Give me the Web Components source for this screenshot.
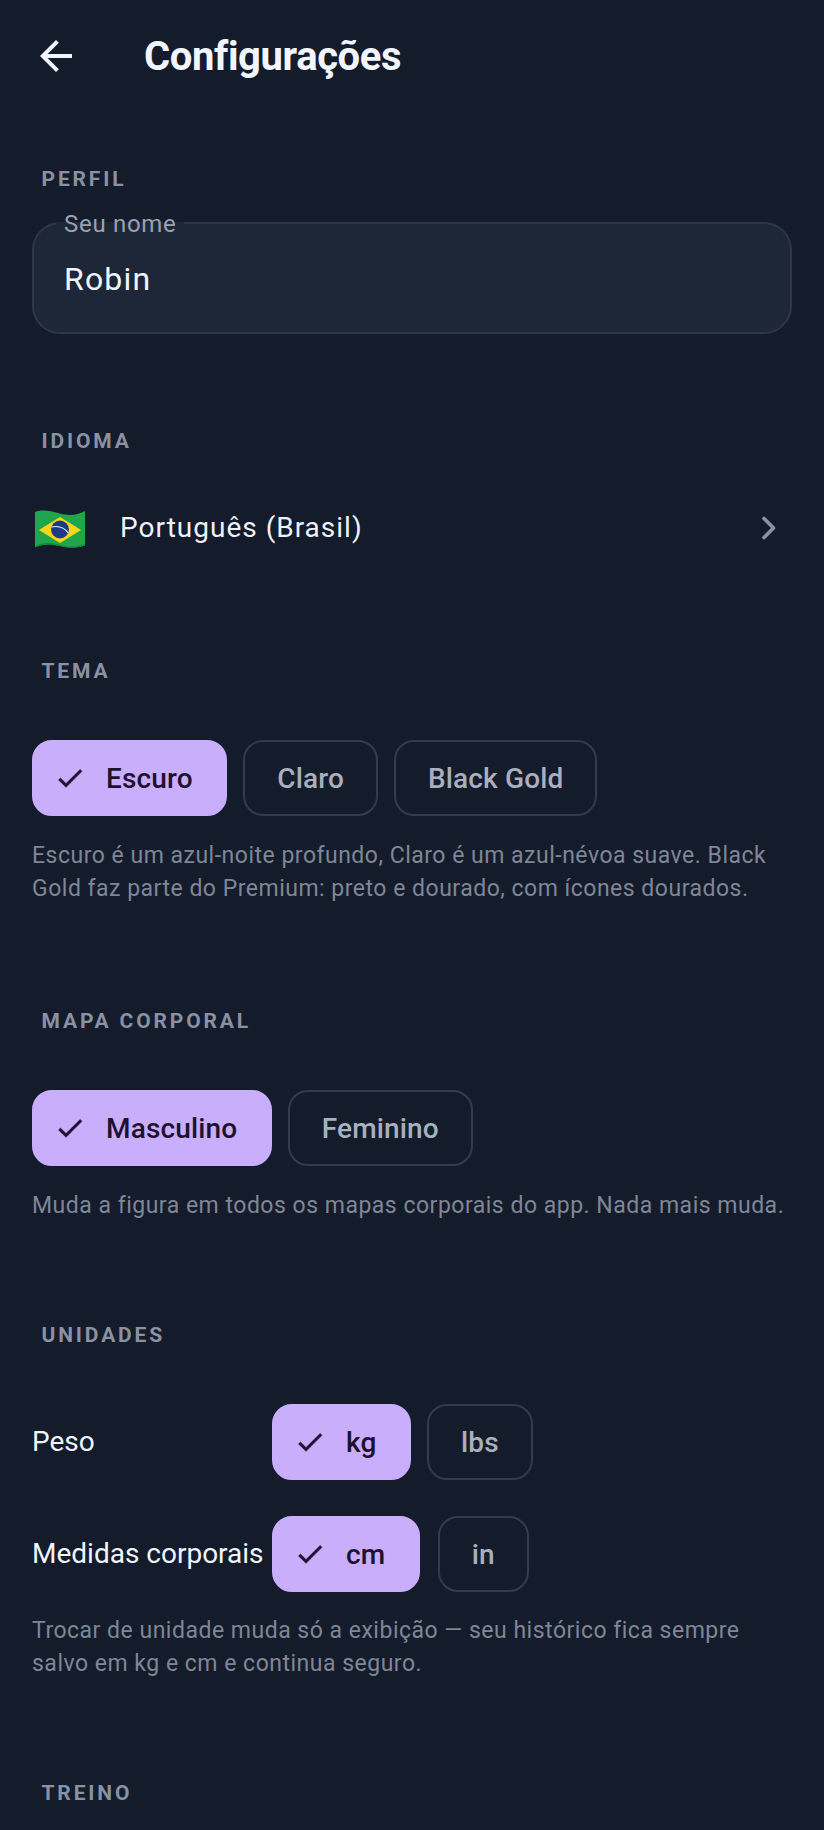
<!DOCTYPE html>
<html lang="pt-BR"><head><meta charset="utf-8"><title>Configurações</title>
<style>
html,body{margin:0;padding:0;height:1830px;overflow:hidden;background:#141b2b;font-family:Roboto,"Noto Sans",sans-serif;}
</style></head><body>
<settings-page>
  <app-bar>Configurações</app-bar>
  <section-label style="margin-top:55px">PERFIL</section-label>
  <name-field label="Seu nome" value="Robin" style="margin-top:31px"></name-field>
  <section-label style="margin-top:95px">IDIOMA</section-label>
  <language-row style="margin-top:27px">Português (Brasil)</language-row>
  <section-label style="margin-top:83px">TEMA</section-label>
  <chip-row style="margin-top:57px"><choice-chip selected>Escuro</choice-chip><choice-chip>Claro</choice-chip><choice-chip>Black Gold</choice-chip></chip-row>
  <helper-text style="margin-top:23px">Escuro é um azul-noite profundo, Claro é um azul-névoa suave. Black Gold faz parte do Premium: preto e dourado, com ícones dourados.</helper-text>
  <section-label style="margin-top:104px">MAPA CORPORAL</section-label>
  <chip-row style="margin-top:57px"><choice-chip selected>Masculino</choice-chip><choice-chip>Feminino</choice-chip></chip-row>
  <helper-text style="margin-top:23px">Muda a figura em todos os mapas corporais do app. Nada mais muda.</helper-text>
  <section-label style="margin-top:101px">UNIDADES</section-label>
  <unit-row label="Peso" style="margin-top:57px"><choice-chip selected>kg</choice-chip><choice-chip>lbs</choice-chip></unit-row>
  <unit-row label="Medidas corporais" style="margin-top:36px;--chip-gap:18px"><choice-chip selected>cm</choice-chip><choice-chip>in</choice-chip></unit-row>
  <helper-text style="margin-top:22px">Trocar de unidade muda só a exibição — seu histórico fica sempre salvo em kg e cm e continua seguro.</helper-text>
  <section-label style="margin-top:101px">TREINO</section-label>
</settings-page>
<script>
function def(name, html, init){
  customElements.define(name, class extends HTMLElement{
    constructor(){super();const r=this.attachShadow({mode:'open'});r.innerHTML=html;}
    connectedCallback(){ if(init) init(this,this.shadowRoot); }
  });
}
def('settings-page',`<style>:host{display:block;width:824px;height:1830px;overflow:hidden;background:#141b2b}</style><slot></slot>`);
def('app-bar',`<style>
:host{display:flex;align-items:center;height:112px;padding-left:32px;box-sizing:border-box}
svg{width:48px;height:48px;flex:none}
.t{margin-left:64px;padding-top:2px;font:700 40px/48px Roboto,sans-serif;color:#f1f5fd;letter-spacing:-.4px}
</style>
<svg viewBox="0 0 24 24" aria-hidden="true"><path fill="#f1f5fd" d="M20 11H7.83l5.59-5.59L12 4l-8 8 8 8 1.41-1.41L7.83 13H20v-2z"/></svg>
<div class="t"><slot></slot></div>`);
def('section-label',`<style>
:host{display:block;padding-left:41.5px;font:700 21px/24px Roboto,sans-serif;letter-spacing:2.85px;color:#8a91a3}
</style><slot></slot>`);
def('name-field',`<style>
:host{display:block;margin-left:32px;width:760px;position:relative}
.box{box-sizing:border-box;height:112px;border:2px solid #2e3748;border-radius:28px;background:#1e2737;padding:2px 30px 0;display:flex;align-items:center;font:400 32px/40px Roboto,sans-serif;letter-spacing:1.2px;color:#f1f5fd}
.lab{position:absolute;left:24px;top:-12px;padding:0 8px;font:400 24px/28px Roboto,sans-serif;letter-spacing:.7px;color:#9aa1b0;background:linear-gradient(#141b2b 0 12px,#1e2737 12px)}
</style><div class="box"><span id="v"></span></div><div class="lab" id="l"></div>`,(h,r)=>{r.getElementById('v').textContent=h.getAttribute('value');r.getElementById('l').textContent=h.getAttribute('label');});
def('language-row',`<style>
:host{display:flex;align-items:center;height:96px;box-sizing:border-box;padding:0 32px}
svg.f{width:52px;height:40px;flex:none;margin-left:2px}
.t{margin-left:34px;flex:1;font:400 28px/36px Roboto,sans-serif;letter-spacing:1px;color:#eef2fa}
svg.c{width:16px;height:24px;flex:none;margin-right:15px}
</style>
<svg class="f" viewBox="0 0 52 40" aria-hidden="true">
<path fill="#1fa54c" d="M1 4C8 1.500 15 2.500 26 5.500c10 2.700 17 1.500 25-2.500v34.500c-8 2.500-15 2.700-25 .5C16 35.500 8 36 1 39.500z"/>
<path fill="#128a3e" d="M1 38C8 34.500 16 34 26 37c10 2.700 17 1.500 25-1v1.500c-8 2.500-15 2.700-25 .5C16 35.500 8 36 1 39.500z"/>
<path fill="#fbd616" d="M26 9 47 22 26 35 5 22z"/>
<circle cx="26" cy="21.500" r="9" fill="#1d3a8a"/>
<path fill="none" stroke="#e8eefc" stroke-width="1.200" d="M17.300 19c7-1.500 13 .5 17 6"/>
</svg>
<div class="t"><slot></slot></div>
<svg class="c" viewBox="0 0 16 24" aria-hidden="true"><path fill="none" stroke="#8a91a3" stroke-width="3.600" stroke-linecap="round" stroke-linejoin="round" d="M3 2.500 12.500 12 3 21.500"/></svg>`);
def('chip-row',`<style>:host{display:flex;gap:16px;padding-left:32px}</style><slot></slot>`);
def('choice-chip',`<style>
:host{display:inline-flex;align-items:center;height:76px;box-sizing:border-box;padding:2px 32px 0;border:2px solid #333b4c;border-radius:20px;font:500 28px/36px Roboto,sans-serif;color:#a9afbd;letter-spacing:.15px;white-space:nowrap}
:host([selected]){background:#c9aefc;border-color:#c9aefc;color:#1c1230;padding:2px 32.500px 0 20px}
svg{display:none;width:32px;height:32px;margin:-2px 20px 0 0;flex:none}
:host([selected]) svg{display:block}
path{stroke:#1c1230;stroke-width:.4}
</style><svg viewBox="0 0 24 24" aria-hidden="true"><path fill="#1c1230" d="M9 16.170 4.830 12l-1.410 1.410L9 19 21 7l-1.410-1.410z"/></svg><slot></slot>`);
def('helper-text',`<style>
:host{display:block;padding:0 32px;font:400 23px/33px Roboto,sans-serif;letter-spacing:.5px;color:#7f8696}
</style><slot></slot>`);
def('unit-row',`<style>
:host{display:flex;align-items:center;padding-left:32px}
.l{width:240px;flex:none;font:400 28px/36px Roboto,sans-serif;color:#f1f5fd;white-space:nowrap}
.c{display:flex;gap:var(--chip-gap,16px)}
</style><div class="l" id="l"></div><div class="c"><slot></slot></div>`,(h,r)=>{r.getElementById('l').textContent=h.getAttribute('label');});
</script>
</body></html>
